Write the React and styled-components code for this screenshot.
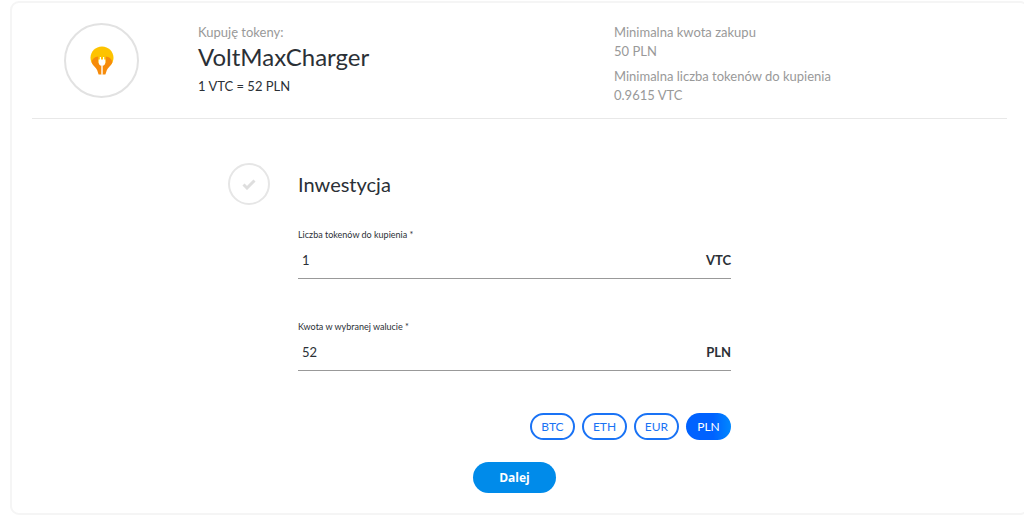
import React, { useState } from "react";
import styled, { createGlobalStyle, css } from "styled-components";

const RATE = 52;

const currencies = ["BTC", "ETH", "EUR", "PLN"];

function App() {
  const [tokens, setTokens] = useState("1");
  const [amount, setAmount] = useState("52");
  const [currency, setCurrency] = useState("PLN");

  const changeTokens = (e) => {
    setTokens(e.target.value);
    setAmount(String(Number(e.target.value) * RATE));
  };

  const changeAmount = (e) => {
    setAmount(e.target.value);
    setTokens((Number(e.target.value) / RATE).toFixed(4));
  };

  return (
    <Page>
      <GlobalStyle />
      <Card>
        <Header>
          <Logo>
            <BulbIcon />
          </Logo>
          <div>
            <Muted>Kupuję tokeny:</Muted>
            <TokenName>VoltMaxCharger</TokenName>
            <Rate>1 VTC = 52 PLN</Rate>
          </div>
          <Limits>
            <Muted as="dt">Minimalna kwota zakupu</Muted>
            <Muted as="dd">50 PLN</Muted>
            <Muted as="dt">Minimalna liczba tokenów do kupienia</Muted>
            <Muted as="dd">0.9615 VTC</Muted>
          </Limits>
        </Header>

        <Step onSubmit={(e) => e.preventDefault()}>
          <StepMark>
            <CheckIcon />
          </StepMark>
          <Fields>
            <StepTitle>Inwestycja</StepTitle>

            <Field>
              <Label htmlFor="tokens">Liczba tokenów do kupienia *</Label>
              <InputRow>
                <Input id="tokens" value={tokens} onChange={changeTokens} />
                <Unit>VTC</Unit>
              </InputRow>
            </Field>

            <Field>
              <Label htmlFor="amount">Kwota w wybranej walucie *</Label>
              <InputRow>
                <Input id="amount" value={amount} onChange={changeAmount} />
                <Unit>{currency}</Unit>
              </InputRow>
            </Field>

            <Currencies>
              {currencies.map((name) => (
                <CurrencyButton
                  key={name}
                  type="button"
                  $active={name === currency}
                  onClick={() => setCurrency(name)}
                >
                  {name}
                </CurrencyButton>
              ))}
            </Currencies>

            <NextButton type="submit">Dalej</NextButton>
          </Fields>
        </Step>
      </Card>
    </Page>
  );
}

export default App;

const BulbIcon = () => (
  <svg width="24" height="29" viewBox="0 0 24 29" aria-hidden="true">
    <path
      d="M12 0.5C5.5 0.5 0.5 5.5 0.5 11.8C0.5 15 1.8 17.6 3.8 19.6H20.2C22.2 17.6 23.5 15 23.5 11.8C23.5 5.5 18.5 0.5 12 0.5Z"
      fill="#fdc300"
    />
    <path
      d="M8.2 10.6C5 10.8 2 13.2 1.6 16.2C2.8 19.6 6 21.2 7.2 24.2L8.6 28.5H11.6V19.8H12.4V28.5H15.4L16.8 24.2C18 21.2 21.2 19.6 22.4 16.2C22 13.2 19 10.8 15.8 10.6V17H8.2Z"
      fill="#f68b0b"
    />
    <path
      d="M9.8 11V13.6H8.6V16.2C8.6 18.2 9.8 19.4 11.5 19.8V28.5H12.5V19.8C14.2 19.4 15.4 18.2 15.4 16.2V13.6H14.2V11H13V13.6H11V11Z"
      fill="#fff"
    />
  </svg>
);

const CheckIcon = () => (
  <svg width="14" height="11" viewBox="0 0 14 11" aria-hidden="true">
    <path d="M1.5 5.5L5 9L12.5 1.5" fill="none" stroke="#dedede" strokeWidth="3" />
  </svg>
);

const GlobalStyle = createGlobalStyle`
  *, *::before, *::after {
    box-sizing: border-box;
  }
  body {
    margin: 0;
    background: #fff;
    color: #2b3036;
    font-family: Lato, "Liberation Sans", sans-serif;
    font-size: 13px;
  }
  button, input {
    font-family: inherit;
  }
`;

const Page = styled.main`
  padding: 1px 0 4px 10px;
  overflow: hidden;
`;

// the card runs a little past the right edge of the page
const Card = styled.section`
  margin-right: -5px;
  padding: 0 20px 20px;
  border: 2px solid #f5f5f5;
  border-radius: 9px;
`;

const Header = styled.header`
  display: grid;
  grid-template-columns: 166px 416fr 393fr;
  padding: 20px 0 13px;
  border-bottom: 1px solid #e8e8e8;
`;

const Logo = styled.div`
  display: flex;
  align-items: center;
  justify-content: center;
  width: 75px;
  height: 75px;
  margin-left: 32px;
  border: 2px solid #e2e2e2;
  border-radius: 50%;
`;

const Muted = styled.p`
  margin: 0;
  color: #999;
  font-size: 13px;
  line-height: 19px;
`;

const TokenName = styled.h1`
  margin: 0;
  font-size: 24px;
  font-weight: 400;
  line-height: 29px;
`;

const Rate = styled.p`
  margin: 6px 0 0;
  font-size: 13px;
  line-height: 19px;
`;

const Limits = styled.dl`
  margin: 0;

  dd + dt {
    margin-top: 6px;
  }
`;

const Step = styled.form`
  display: grid;
  grid-template-columns: 42px 1fr;
  column-gap: 28px;
  margin: 44px 276px 0 196px;
`;

const StepMark = styled.div`
  display: flex;
  align-items: center;
  justify-content: center;
  height: 42px;
  border: 2px solid #e6e6e6;
  border-radius: 50%;
`;

const Fields = styled.div`
  display: flex;
  flex-direction: column;
`;

const StepTitle = styled.h2`
  margin: 0 0 24px;
  font-size: 20px;
  font-weight: 400;
  line-height: 42px;
`;

const Field = styled.div`
  margin-bottom: 42px;
`;

const Label = styled.label`
  display: block;
  font-size: 9px;
  line-height: 12px;
`;

const InputRow = styled.div`
  display: flex;
  align-items: center;
  height: 38px;
  border-bottom: 1px solid #999;
`;

const Input = styled.input`
  flex: 1;
  min-width: 0;
  padding: 0 4px;
  border: 0;
  outline: 0;
  background: transparent;
  color: #2b3036;
  font-size: 13px;
`;

const Unit = styled.span`
  font-size: 13px;
  font-weight: 700;
`;

const Currencies = styled.div`
  display: flex;
  justify-content: flex-end;
  gap: 7px;
`;

const CurrencyButton = styled.button`
  width: 45px;
  height: 27px;
  padding: 0;
  border: 2px solid #1a73f5;
  border-radius: 14px;
  background: #fff;
  color: #1a73f5;
  font-size: 12px;
  cursor: pointer;

  ${(p) =>
    p.$active &&
    css`
      border: 0;
      background: linear-gradient(90deg, #0062ff 60%, #0088ff);
      color: #fff;
    `}
`;

const NextButton = styled.button`
  align-self: center;
  width: 83px;
  height: 31px;
  margin-top: 22px;
  padding: 0;
  border: 0;
  border-radius: 16px;
  background: #008bea;
  color: #fff;
  font-family: "Open Sans", sans-serif;
  font-size: 12px;
  font-weight: 700;
  cursor: pointer;
`;
